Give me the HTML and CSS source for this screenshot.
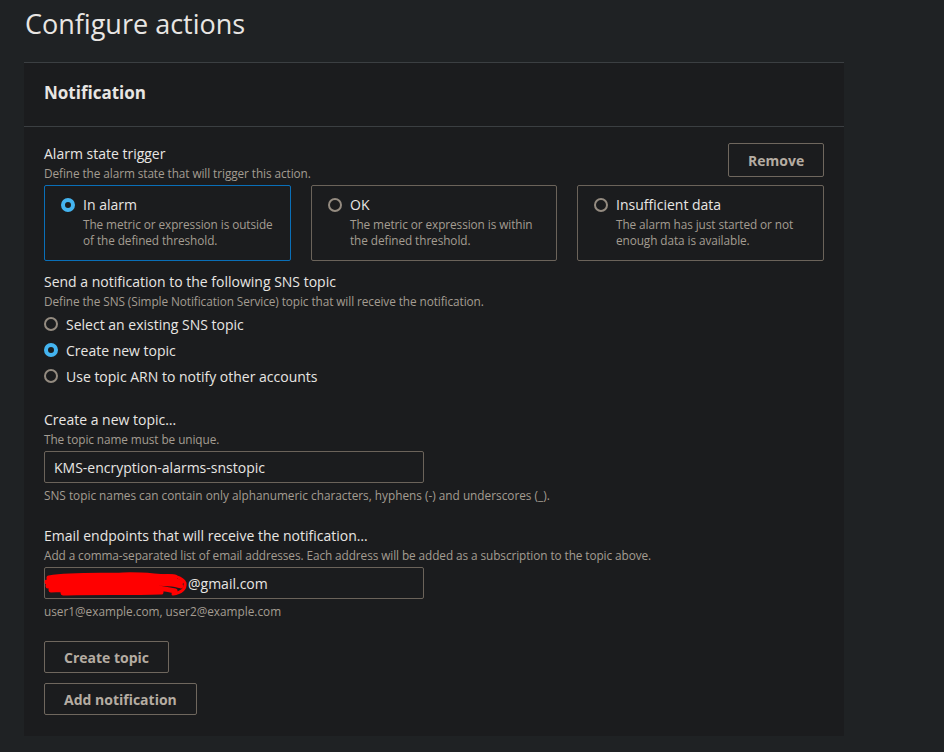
FILE: index.html
```html
<!DOCTYPE html>
<html lang="en">
<head>
<meta charset="utf-8">
<title>Configure actions</title>
<link rel="stylesheet" href="styles.css">
</head>
<body>
<div class="page">
  <h1 class="title">Configure actions</h1>
  <section class="panel">
    <header class="panel-head">
      <h2 class="panel-title">Notification</h2>
    </header>
    <div class="panel-body">
      <div class="trigger-head">
        <div>
          <div class="label">Alarm state trigger</div>
          <div class="desc">Define the alarm state that will trigger this action.</div>
        </div>
        <button class="btn btn-remove">Remove</button>
      </div>
      <div class="cards">
        <div class="card selected">
          <span class="radio checked"></span>
          <div class="card-text">
            <div class="card-title">In alarm</div>
            <div class="desc">The metric or expression is outside of the defined threshold.</div>
          </div>
        </div>
        <div class="card">
          <span class="radio"></span>
          <div class="card-text">
            <div class="card-title">OK</div>
            <div class="desc">The metric or expression is within the defined threshold.</div>
          </div>
        </div>
        <div class="card">
          <span class="radio"></span>
          <div class="card-text">
            <div class="card-title">Insufficient data</div>
            <div class="desc">The alarm has just started or not enough data is available.</div>
          </div>
        </div>
      </div>

      <div class="group sns">
        <div class="label">Send a notification to the following SNS topic</div>
        <div class="desc">Define the SNS (Simple Notification Service) topic that will receive the notification.</div>
        <div class="radio-list">
          <div class="radio-row"><span class="radio"></span><span>Select an existing SNS topic</span></div>
          <div class="radio-row"><span class="radio checked"></span><span>Create new topic</span></div>
          <div class="radio-row"><span class="radio"></span><span>Use topic ARN to notify other accounts</span></div>
        </div>
      </div>

      <div class="group topic">
        <div class="label">Create a new topic…</div>
        <div class="desc">The topic name must be unique.</div>
        <div class="input">KMS-encryption-alarms-snstopic</div>
        <div class="hint">SNS topic names can contain only alphanumeric characters, hyphens (-) and underscores (_).</div>
      </div>

      <div class="group email">
        <div class="label">Email endpoints that will receive the notification…</div>
        <div class="desc">Add a comma-separated list of email addresses. Each address will be added as a subscription to the topic above.</div>
        <div class="input email-input">
          <span class="masked">redacted.user</span>@gmail.com
          <svg class="scribble" width="146" height="26" viewBox="0 0 146 26" aria-hidden="true">
            <path d="M6 7 C30 3 60 5 80 4 C100 3 115 6 132 6 M4 11 C40 8 70 9 100 8 C115 8 128 9 138 11 M5 15 C40 12 80 13 105 12 C120 12 132 13 138 15 M8 19 C40 17 70 18 95 17 C112 16 124 18 132 20 M20 22 C50 21 85 22 118 21" fill="none" stroke="#ff0000" stroke-width="5" stroke-linecap="round"/>
            <path d="M118 5 C130 3 140 7 142 12 C143 18 138 22 130 23" fill="none" stroke="#ff0000" stroke-width="3" stroke-linecap="round"/>
          </svg>
        </div>
        <div class="hint">user1@example.com, user2@example.com</div>
      </div>

      <div class="actions">
        <button class="btn">Create topic</button>
        <button class="btn">Add notification</button>
      </div>
    </div>
  </section>
</div>
</body>
</html>
```
FILE: styles.css
```css
* { box-sizing: border-box; }
html, body { margin: 0; padding: 0; }
body {
  background: #1f2224;
  color: #e8e6e3;
  font-family: "Open Sans", "Noto Sans", "Liberation Sans", sans-serif;
  width: 944px;
  height: 752px;
  overflow: hidden;
}
.page { padding: 0 0 0 24px; }
.title {
  margin: 0;
  padding-top: 6px;
  height: 62px;
  font-size: 27px;
  font-weight: 400;
  line-height: 36px;
  color: #e8e6e3;
  padding-left: 1px;
}
.panel {
  width: 820px;
  background: #1b1c1e;
  border-top: 1px solid #3b3f42;
}
.panel-head {
  height: 64px;
  border-bottom: 1px solid #3b3f42;
  padding: 0 20px;
  display: flex;
  align-items: center;
}
.panel-title {
  margin: 0;
  font-size: 17px;
  font-weight: 700;
  color: #e8e6e3;
  padding-bottom: 4px;
}
.panel-body {
  padding: 17px 20px 21px 20px;
}
.label {
  font-size: 14px;
  line-height: 20px;
  color: #e8e6e3;
}
.desc, .hint {
  font-size: 11.8px;
  line-height: 16px;
  color: #a49c92;
}
.desc { letter-spacing: -0.08px; }
.trigger-head {
  display: flex;
  justify-content: space-between;
  align-items: flex-start;
}
.trigger-head .desc { margin-top: 1px; }
.btn {
  font-family: inherit;
  font-size: 14px;
  font-weight: 700;
  color: #b5aca2;
  background: transparent;
  border: 1px solid #6f675e;
  border-radius: 2px;
  height: 32px;
  padding: 0 19px;
  cursor: pointer;
}
.btn-remove {
  margin-top: -1px;
  width: 96px;
  height: 34px;
}
.cards {
  margin-top: 4px;
  display: grid;
  grid-template-columns: 247px 246px 247px;
  column-gap: 20px;
}
.card {
  height: 76px;
  border: 1px solid #6b635a;
  border-radius: 2px;
  padding: 9px 8px 0 16px;
  display: flex;
  gap: 8px;
  align-items: flex-start;
}
.card.selected { border-color: #0a6fb8; }
.card .radio { margin-top: 3px; }
.card-title {
  font-size: 14px;
  line-height: 20px;
  color: #e8e6e3;
}
.card .desc { line-height: 16px; margin-top: 1px; }
.radio {
  flex: none;
  display: inline-block;
  width: 14px;
  height: 14px;
  border-radius: 50%;
  border: 2px solid #948b80;
  background: transparent;
}
.radio.checked {
  border: 4.5px solid #44b4f0;
  background: #1b1c1e;
}
.group.sns { margin-top: 11px; }
.group.sns .desc { margin-top: 1px; }
.radio-list { margin-top: 2px; }
.radio-row {
  height: 26px;
  display: flex;
  align-items: center;
  gap: 8px;
  font-size: 14px;
  color: #e8e6e3;
}
.group.topic { margin-top: 21px; }
.group.topic .desc { margin-top: 1px; }
.group.email { margin-top: 23px; }
.group.email .desc { margin-top: 1px; }
.input {
  margin-top: 4px;
  width: 380px;
  height: 32px;
  border: 1px solid #6b635a;
  border-radius: 2px;
  padding: 0 9px;
  display: flex;
  align-items: center;
  font-size: 14px;
  color: #e8e6e3;
}
.group.topic .hint { margin-top: 4px; }
.group.email .hint { margin-top: 4px; }
.email-input { position: relative; }
.masked {
  display: inline-block;
  width: 134px;
  overflow: hidden;
  white-space: nowrap;
  color: #c9c3bb;
}
.scribble {
  position: absolute;
  left: -2px;
  top: 3px;
}
.actions {
  margin-top: 22px;
  display: flex;
  flex-direction: column;
  align-items: flex-start;
  gap: 10px;
}
```
